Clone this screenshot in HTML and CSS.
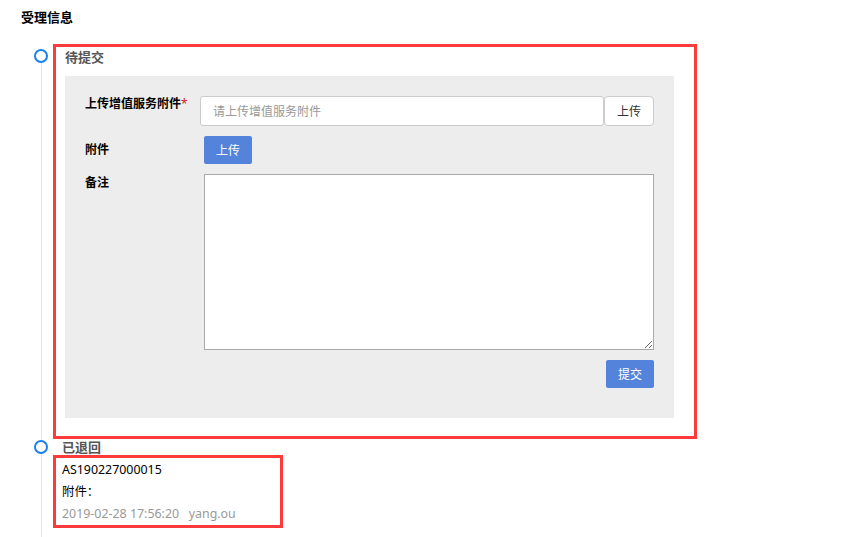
FILE: index.html
```html
<!DOCTYPE html>
<html lang="zh-CN">
<head>
  <meta charset="UTF-8" />
  <title>受理信息</title>
  <link rel="stylesheet" href="styles.css">
</head>
<body>

<div class="page">
  <div class="section-title">受理信息</div>

  <div class="timeline">
    <div class="tl-item">
      <span class="tl-dot"></span>
      <div class="mark-box pending">
        <div class="tl-head">待提交</div>
        <div class="form-panel">
          <div class="form-row">
            <label class="form-label">上传增值服务附件<span class="req">*</span></label>
            <div class="input-group">
              <input type="text" class="text-input" placeholder="请上传增值服务附件" />
              <button class="btn-default">上传</button>
            </div>
          </div>
          <div class="form-row center">
            <label class="form-label">附件</label>
            <div class="control">
              <button class="btn-primary">上传</button>
            </div>
          </div>
          <div class="form-row">
            <label class="form-label pad">备注</label>
            <div class="control">
              <textarea class="remark"></textarea>
            </div>
          </div>
          <div class="form-actions">
            <button class="btn-primary">提交</button>
          </div>
        </div>
      </div>
    </div>

    <div class="tl-item">
      <span class="tl-dot"></span>
      <div class="tl-head small">已退回</div>
      <div class="mark-box record">
        <div>AS190227000015</div>
        <div>附件：</div>
        <div class="meta">2019-02-28 17:56:20&nbsp;&nbsp;&nbsp;yang.ou</div>
      </div>
    </div>
  </div>
</div>

</body>
</html>
```

FILE: styles.css
```css
body {
  margin: 0;
  font-family: "Noto Sans", "Noto Sans CJK SC", sans-serif;
  font-size: 12px;
  color: #000;
  background: #fff;
}
.page {
  padding: 7px 0 0 21px;
}
.section-title {
  font-size: 13px;
  font-weight: bold;
  line-height: 20px;
}
.timeline {
  position: relative;
  margin: 17px 0 0 20px;
  padding-left: 12px;
  height: 493px;
}
.timeline::before {
  content: "";
  position: absolute;
  left: 0;
  top: 12px;
  bottom: 0;
  width: 1px;
  background: #e3e3e3;
}
.tl-item {
  position: relative;
}
.tl-dot {
  position: absolute;
  left: -19px;
  top: 5px;
  width: 10px;
  height: 10px;
  border: 2px solid #1a80f0;
  border-radius: 50%;
  background: #fff;
}
.tl-item + .tl-item .tl-dot {
  top: 1px;
}
.mark-box {
  border: 3px solid #fd3b3b;
}
.pending {
  width: 638px;
  padding: 0 0 18px 0;
}
.tl-head {
  padding-left: 9px;
  font-size: 13px;
  font-weight: bold;
  color: #555;
  line-height: 20px;
  margin-bottom: 9px;
}
.tl-head.small {
  margin-bottom: 0;
  line-height: 16px;
  padding-left: 9px;
}
.form-panel {
  margin-left: 9px;
  width: 569px;
  height: 292px;
  background: #ededed;
  padding: 20px 20px 30px 20px;
}
.form-row {
  display: flex;
  align-items: flex-start;
  margin-bottom: 10px;
}
.form-row.center {
  align-items: center;
}
.form-label {
  width: 115px;
  flex: none;
  font-weight: bold;
  line-height: 16px;
}
.form-label.pad {
  padding-top: 1px;
}
.req {
  color: #e02020;
  font-weight: normal;
}
.input-group {
  display: flex;
  flex: 1;
  height: 30px;
}
.text-input {
  flex: 1;
  box-sizing: border-box;
  height: 30px;
  border: 1px solid #ccc;
  border-radius: 3px;
  padding: 0 12px;
  font-family: inherit;
  font-size: 12px;
  outline: none;
}
.text-input::placeholder {
  color: #999;
}
.btn-default {
  width: 50px;
  height: 30px;
  border: 1px solid #ccc;
  border-radius: 4px;
  background: #fff;
  font-family: inherit;
  font-size: 12px;
  color: #333;
}
.control {
  margin-left: 4px;
}
.btn-primary {
  width: 48px;
  height: 28px;
  border: none;
  border-radius: 2px;
  background: #5383da;
  color: #fff;
  font-family: inherit;
  font-size: 12px;
  padding: 0;
}
.remark {
  display: block;
  box-sizing: border-box;
  width: 450px;
  height: 176px;
  border: 1px solid #a9a9a9;
  margin: 0;
}
.form-actions {
  display: flex;
  justify-content: flex-end;
}
.record {
  width: 218px;
  padding: 1px 0 0 6px;
  height: 66px;
  line-height: 22px;
  font-size: 12.4px;
}
.meta {
  color: #999;
}
```
